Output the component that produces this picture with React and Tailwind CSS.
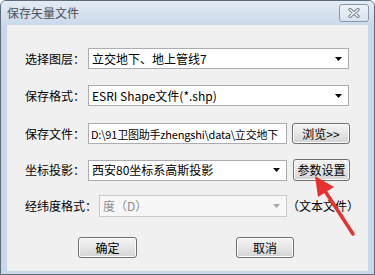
import React from 'react';

const CJK = "font-['Noto_Sans_CJK_SC','Noto_Sans',sans-serif]";

const Arrow = ({ disabled }) => (
  <svg width="7" height="4" viewBox="0 0 7 4" className="shrink-0">
    <path d="M0 0 H7 L3.5 4 Z" fill={disabled ? '#a8a8a8' : '#000'} />
  </svg>
);

const Combo = ({ value, className = '', disabled = false }) => (
  <div
    className={`h-[21px] flex items-center border ${
      disabled ? 'border-[#c9c9c9] bg-[#f7f7f7] text-[#8e8e8e]' : 'border-[#abadb3] bg-white text-black'
    } pl-[3px] pr-[6px] ${className}`}
  >
    <span className="flex-1 min-w-0 whitespace-nowrap text-[12px] leading-[16px]">{value}</span>
    <Arrow disabled={disabled} />
  </div>
);

const Button = ({ children, className = '' }) => (
  <div
    className={`h-[21px] flex items-center justify-center rounded-[3px] border border-[#707070] bg-gradient-to-b from-[#f4f4f4] via-[#e6e6e6] to-[#d3d3d3] shadow-[inset_0_0_0_1px_#fbfbfb] text-[12px] text-black ${className}`}
  >
    {children}
  </div>
);

const Label = ({ children, w = 'w-[63px]' }) => (
  <span className={`${w} shrink-0 text-[12px] leading-[16px] text-black`}>{children}</span>
);

export default function App() {
  return (
    <div className={`relative w-[375px] h-[275px] flex flex-col bg-[#c8d7e9] border border-[#5f6b7b] rounded-t-[6px] overflow-hidden ${CJK}`}>
      {/* title bar */}
      <div className="h-[24px] shrink-0 flex items-center justify-between pl-[6px] pr-[5px] bg-gradient-to-b from-[#e3ebf4] to-[#cbd9ea]">
        <span className="text-[12px] text-[#4a4f57]">保存矢量文件</span>
        <div className="w-[30px] h-[18px] flex items-center justify-center rounded-[3px] border border-[#8797ab] bg-gradient-to-b from-[#eef3f8] to-[#d8e2ee]">
          <svg width="12" height="10" viewBox="0 0 12 10">
            <path d="M2 1.5 L10 8.5 M10 1.5 L2 8.5" stroke="#6b7686" strokeWidth="3.2" strokeLinecap="round" />
            <path d="M2 1.5 L10 8.5 M10 1.5 L2 8.5" stroke="#ffffff" strokeWidth="1.4" strokeLinecap="round" />
          </svg>
        </div>
      </div>

      {/* client area */}
      <div className="flex-1 flex px-[6px] pb-[3px]">
        <div className="flex-1 flex flex-col bg-[#f0f0f0] pl-[18px]">
          <div className="mt-[23px] flex items-center">
            <Label>选择图层：</Label>
            <Combo value="立交地下、地上管线7" className="w-[261px]" />
          </div>
          <div className="mt-[16px] flex items-center">
            <Label>保存格式：</Label>
            <Combo value="ESRI Shape文件(*.shp)" className="w-[261px]" />
          </div>
          <div className="mt-[17px] flex items-center">
            <Label>保存文件：</Label>
            <div className="w-[199px] h-[21px] flex items-center border border-[#abadb3] bg-white pl-[2px] overflow-hidden">
              <span className="whitespace-nowrap text-[11px] tracking-[-0.2px] leading-[16px]">D:\91卫图助手zhengshi\data\立交地下</span>
            </div>
            <Button className="ml-[5px] w-[58px]">浏览&gt;&gt;</Button>
          </div>
          <div className="mt-[15px] flex items-center">
            <Label>坐标投影：</Label>
            <Combo value="西安80坐标系高斯投影" className="w-[199px]" />
            <Button className="ml-[6px] w-[57px] h-[22px]">参数设置</Button>
          </div>
          <div className="mt-[14px] flex items-center">
            <Label w="w-[74px]">经纬度格式：</Label>
            <Combo value="度（D）" disabled className="w-[188px] h-[22px]" />
            <span className="text-[12px] leading-[16px] text-black whitespace-nowrap">（文本文件）</span>
          </div>
          <div className="mt-[20px] flex items-center pl-[53px]">
            <Button className="w-[59px]">确定</Button>
            <Button className="ml-[99px] w-[58px]">取消</Button>
          </div>
        </div>
      </div>

      {/* red arrow */}
      <svg className="absolute left-0 top-0 pointer-events-none" width="375" height="275" viewBox="0 0 375 275">
        <path d="M324 190 L352 233" stroke="#e8312f" strokeWidth="3.5" strokeLinecap="round" />
        <path d="M314 175 L317 196 L333 186 Z" fill="#e8312f" />
      </svg>
    </div>
  );
}
